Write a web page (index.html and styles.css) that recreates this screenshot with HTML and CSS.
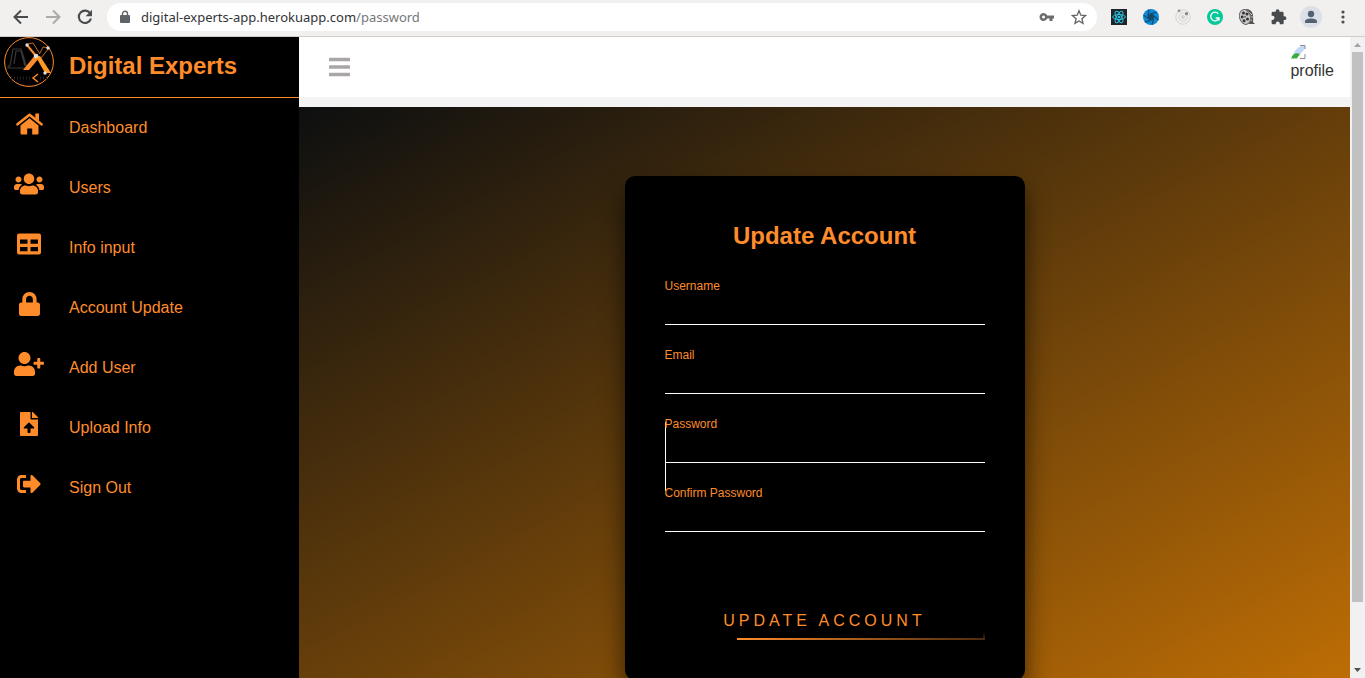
FILE: index.html
```html
<!DOCTYPE html>
<html lang="en">
<head>
<meta charset="utf-8">
<title>Digital Experts</title>
<link rel="stylesheet" href="styles.css">
</head>
<body>
<header class="browser">
  <nav class="browser-nav" aria-label="Browser">
    <button class="tool" aria-label="Back"><svg width="20" height="20" viewBox="0 0 20 20" fill="none" stroke="#4a4b4d" stroke-width="2"><path d="M17 10H4M10 3.500L3.500 10l6.500 6.500"/></svg></button>
    <button class="tool" aria-label="Forward"><svg width="20" height="20" viewBox="0 0 20 20" fill="none" stroke="#aaa" stroke-width="2"><path d="M3 10h13M10 3.500l6.500 6.500-6.500 6.500"/></svg></button>
    <button class="tool" aria-label="Reload"><svg width="20" height="20" viewBox="0 0 20 20"><path d="M15.300 6.500A6.200 6.200 0 1 0 16 11.500" fill="none" stroke="#4a4b4d" stroke-width="2.100"/><path d="M17 2.800v6.400h-6.400z" fill="#4a4b4d"/></svg></button>
  </nav>
  <div class="address">
    <svg width="10" height="14" viewBox="0 0 10 14"><path d="M2.500 6V3.700a2.500 2.500 0 0 1 5 0V6" fill="none" stroke="#5f6368" stroke-width="1.400"/><rect x="0" y="5" width="10" height="8" rx="1" fill="#5f6368"/></svg>
    <span class="url">digital-experts-app.herokuapp.com<span class="url-path">/password</span></span>
    <button class="tool" aria-label="Passwords"><svg width="16" height="16" viewBox="0 0 16 16"><path fill="#6b6c6e" fill-rule="evenodd" d="M8.200 6.500a4 4 0 1 0 0 3H10.500v2.500h3V9.500H15v-3zM4.500 6.500a1.500 1.500 0 1 1 0 3 1.500 1.500 0 0 1 0-3z"/></svg></button>
    <button class="tool" aria-label="Bookmark"><svg width="16" height="16" viewBox="0 0 16 16"><path d="M8 1.800l1.800 4.400 4.700.4-3.600 3.100 1.100 4.600L8 11.900l-4 2.400 1.100-4.600L1.500 6.600l4.700-.4z" fill="none" stroke="#636466" stroke-width="1.300"/></svg></button>
  </div>
  <div class="extensions">
    <button class="tool" aria-label="React tools"><svg width="16" height="16" viewBox="0 0 16 16"><rect width="16" height="16" fill="#20232a"/><g fill="none" stroke="#25c4df" stroke-width="1"><ellipse cx="8" cy="8" rx="6.300" ry="2.500"/><ellipse cx="8" cy="8" rx="6.300" ry="2.500" transform="rotate(60 8 8)"/><ellipse cx="8" cy="8" rx="6.300" ry="2.500" transform="rotate(120 8 8)"/></g><circle cx="8" cy="8" r="1.300" fill="#25c4df"/></svg></button>
    <button class="tool" aria-label="Shutter"><svg width="16" height="16" viewBox="0 0 16 16"><circle cx="8" cy="8" r="8" fill="#0b8bd6"/><circle cx="8" cy="8" r="3.200" fill="#164863"/><path d="M4.800 7.500L6 .5M7 4.900l6.500-1.500M11 7l4.500 4M10.500 10.500L9 15.800M8 11.300L1.800 13M5 9.500L.4 6" stroke="#164e76" stroke-width="1.300"/></svg></button>
    <button class="tool" aria-label="Orbit"><svg width="16" height="16" viewBox="0 0 16 16"><circle cx="8" cy="8" r="7.200" fill="none" stroke="#d2d2d2"/><circle cx="8" cy="8" r="4.200" fill="none" stroke="#d2d2d2"/><circle cx="8" cy="8" r="2" fill="#d0d0d0"/><circle cx="4" cy="1.800" r="1.500" fill="#989898"/><circle cx="11.500" cy="4.700" r="1.600" fill="#858585"/></svg></button>
    <button class="tool" aria-label="Writing assistant"><svg width="16" height="16" viewBox="0 0 16 16"><circle cx="8" cy="8" r="8" fill="#08c798"/><path d="M11.300 4.800A4.300 4.300 0 1 0 12 9H8.700M12 8.500v3.200" fill="none" stroke="#fff" stroke-width="1.300"/></svg></button>
    <button class="tool" aria-label="Film reel"><svg width="16" height="16" viewBox="0 0 16 16"><path d="M7 0c6 0 8 5 7 13l2 2H7z" fill="#555"/><path d="M9 2l4 4M11 8h3M10 12l3-1" stroke="#ccc"/><ellipse cx="6" cy="8" rx="5.500" ry="7.500" fill="#c8c8c8" stroke="#6a6a6a" transform="rotate(-15 6 8)"/><g fill="#333"><circle cx="4.500" cy="4" r="1.500"/><circle cx="8" cy="5" r="1.500"/><circle cx="3.200" cy="8" r="1.400"/><circle cx="5" cy="11.800" r="1.500"/><circle cx="8.500" cy="10" r="1.500"/><circle cx="6" cy="7.800" r=".8"/></g></svg></button>
    <button class="tool" aria-label="Extensions"><svg width="16" height="16" viewBox="0 0 16 16"><path fill="#494a4c" d="M13.500 7.300h-.9V4.200A1.400 1.400 0 0 0 11.200 2.800H8.500V2.100a1.900 1.900 0 0 0-3.800 0v.7H2A1.400 1.400 0 0 0 .6 4.200v2.600h.9a2 2 0 0 1 0 4.100H.6v3A1.400 1.400 0 0 0 2 15.300h2.800v-.9a2 2 0 0 1 4 0v.9h2.500a1.400 1.400 0 0 0 1.400-1.400v-2.800h.8a1.900 1.900 0 0 0 0-3.800z"/></svg></button>
    <button class="tool avatar" aria-label="Account"><svg width="14" height="14" viewBox="0 0 14 14" fill="#526173"><circle cx="7" cy="4" r="3.200"/><path d="M1 13v-1.600C1 9.300 4.500 8.500 7 8.500s6 .8 6 2.900V13z"/></svg></button>
    <button class="tool" aria-label="Menu"><svg width="16" height="16" viewBox="0 0 16 16" fill="#4d4e50"><circle cx="8" cy="3" r="1.600"/><circle cx="8" cy="8" r="1.600"/><circle cx="8" cy="13" r="1.600"/></svg></button>
  </div>
</header>
<div class="app">
  <aside class="sidebar">
    <a class="brand" href="#">
      <svg width="50" height="50" viewBox="0 0 50 50"><circle cx="25" cy="25" r="24.400" fill="#000" stroke="#ff8c2b" stroke-width="1"/><g fill="none" stroke="#39393b" stroke-width="1.200"><path d="M6 29l3-17h8l6 19M10 27l2-13h5l4 15M3 31h20M4 28l2 3"/></g><g fill="none" stroke="#b96927" stroke-width="1"><path d="M24 7l5-1 7 11M36 16l3-6 6 1-8 10"/></g><path d="M19 33h6l11-13-4-3z" fill="#ff8c2b"/><path d="M32 20l4-1 11 17h-6z" fill="#ff9a25"/><path d="M23 8l9 11" stroke="#ff8c2b" stroke-width="2"/><path d="M34 37l-5 4 5 4" fill="none" stroke="#ff8c2b" stroke-width="1.500"/><g fill="#ddd"><circle cx="23" cy="8" r="1.700"/><circle cx="32" cy="19" r="2.300"/><circle cx="44" cy="11" r="1.700"/><circle cx="41" cy="36" r="1.700"/></g><path d="M7 41h20M36 41h9" stroke="#242424" stroke-width="3" stroke-dasharray="1 2"/></svg>
      <span class="brand-name">Digital Experts</span>
    </a>
    <nav class="menu" aria-label="Main">
      <a href="#"><svg width="30" height="24" viewBox="0 0 30 24"><path d="M3.500 12.300L15.500 2.800 27.500 12.300" fill="none" stroke="currentColor" stroke-width="2.700" stroke-linecap="round" stroke-linejoin="round"/><path d="M21.300 1.500H25V9l-3.700-3z"/><path d="M6.500 13.500l9-7.200 9 7.200v8a1 1 0 0 1-1 1h-5.300v-6h-5v6H7.500a1 1 0 0 1-1-1z"/></svg><span>Dashboard</span></a>
      <a href="#"><svg width="30" height="24" viewBox="0 0 640 512"><path d="M96 224c35.300 0 64-28.700 64-64s-28.700-64-64-64-64 28.700-64 64 28.700 64 64 64zm448 0c35.300 0 64-28.700 64-64s-28.700-64-64-64-64 28.700-64 64 28.700 64 64 64zm32 32h-64c-17.600 0-33.500 7.100-45.100 18.600 40.300 22.100 68.900 62 75.100 109.400h66c17.700 0 32-14.300 32-32v-32c0-35.300-28.700-64-64-64zm-256 0c61.900 0 112-50.100 112-112S381.900 32 320 32 208 82.100 208 144s50.100 112 112 112zm76.800 32h-8.300c-20.800 10-43.900 16-68.500 16s-47.600-6-68.500-16h-8.300C179.600 288 128 339.600 128 403.200V432c0 26.500 21.500 48 48 48h288c26.500 0 48-21.500 48-48v-28.800c0-63.600-51.600-115.200-115.200-115.200zm-223.700-13.400C161.500 263.100 145.600 256 128 256H64c-35.300 0-64 28.700-64 64v32c0 17.700 14.300 32 32 32h65.900c6.300-47.400 34.900-87.300 75.200-109.400z"/></svg><span>Users</span></a>
      <a href="#"><svg width="30" height="24" viewBox="0 0 30 24"><path fill-rule="evenodd" d="M5 1.500h20a2 2 0 0 1 2 2v17a2 2 0 0 1-2 2H5a2 2 0 0 1-2-2v-17a2 2 0 0 1 2-2zM6 7.500v4.200h7.500V7.500zm10.500 0v4.200H24V7.500zM6 15v4.200h7.500V15zm10.500 0v4.200H24V15z"/></svg><span>Info input</span></a>
      <a href="#"><svg width="30" height="24" viewBox="-106 0 640 512"><path d="M400 224h-24v-72C376 68.200 307.800 0 224 0S72 68.200 72 152v72H48c-26.500 0-48 21.500-48 48v192c0 26.500 21.500 48 48 48h352c26.500 0 48-21.500 48-48V272c0-26.500-21.500-48-48-48zm-104 0H152v-72c0-39.700 32.300-72 72-72s72 32.300 72 72v72z"/></svg><span>Account Update</span></a>
      <a href="#"><svg width="30" height="24" viewBox="0 0 640 512"><path d="M624 208h-64v-64c0-8.800-7.200-16-16-16h-32c-8.800 0-16 7.200-16 16v64h-64c-8.800 0-16 7.200-16 16v32c0 8.800 7.200 16 16 16h64v64c0 8.800 7.200 16 16 16h32c8.800 0 16-7.200 16-16v-64h64c8.800 0 16-7.200 16-16v-32c0-8.800-7.200-16-16-16zm-400 48c70.700 0 128-57.300 128-128S294.700 0 224 0 96 57.300 96 128s57.300 128 128 128zm89.600 32h-16.700c-22.200 10.200-46.900 16-72.900 16s-50.600-5.800-72.900-16h-16.700C60.200 288 0 348.200 0 422.400V464c0 26.500 21.500 48 48 48h352c26.500 0 48-21.500 48-48v-41.600c0-74.200-60.200-134.400-134.400-134.400z"/></svg><span>Add User</span></a>
      <a href="#"><svg width="30" height="24" viewBox="-128 0 640 512"><path d="M224 136V0H24C10.700 0 0 10.700 0 24v464c0 13.300 10.700 24 24 24h336c13.300 0 24-10.700 24-24V160H248c-13.200 0-24-10.800-24-24zm65.200 216H224v80c0 8.800-7.200 16-16 16h-32c-8.800 0-16-7.200-16-16v-80H94.800c-14.300 0-21.400-17.300-11.300-27.400l96.400-95.700c6.700-6.600 17.400-6.600 24 0l96.400 95.700c10.200 10.100 3.100 27.400-11.100 27.400zM377 105L279.100 7c-4.500-4.500-10.600-7-17-7H256v128h128v-6.100c0-6.300-2.500-12.400-7-16.900z"/></svg><span>Upload Info</span></a>
      <a href="#"><svg width="30" height="24" viewBox="-64 0 640 512"><path d="M497 273L329 441c-15 15-41 4.500-41-17v-96H152c-13.300 0-24-10.700-24-24v-96c0-13.300 10.700-24 24-24h136V88c0-21.400 25.900-32 41-17l168 168c9.300 9.400 9.300 24.600 0 34zM192 436v-40c0-6.600-5.400-12-12-12H96c-17.700 0-32-14.300-32-32V160c0-17.700 14.300-32 32-32h84c6.600 0 12-5.400 12-12V76c0-6.600-5.400-12-12-12H96c-53 0-96 43-96 96v192c0 53 43 96 96 96h84c6.600 0 12-5.400 12-12z"/></svg><span>Sign Out</span></a>
    </nav>
  </aside>
  <div class="main">
    <div class="topbar">
      <button class="tool" aria-label="Toggle menu"><svg width="22" height="20" viewBox="0 0 22 20" fill="#aaa6a6"><rect x="0" y=".7" width="21" height="3.600" rx=".6"/><rect x="0" y="8.200" width="21" height="3.600" rx=".6"/><rect x="0" y="15.700" width="21" height="3.600" rx=".6"/></svg></button>
      <a class="profile" href="#">
        <svg width="16" height="16" viewBox="0 0 16 16"><path d="M2 13C4 7 8 2 14 1.500h1V5L7 14H2z" fill="#c4d8f5"/><path d="M1 14.500c2-5 6-6.500 9-4l-3 4z" fill="#38ad3c"/><path d="M10 1.500h5V5M15 10v4.500h-5" fill="none" stroke="#8d8d8d"/><path d="M15 6l-7 8" stroke="#fff" stroke-width="1.500"/></svg>
        <span>profile</span>
      </a>
    </div>
    <main class="stage">
      <form class="card">
        <h1>Update Account</h1>
        <div class="field"><label for="username">Username</label><input id="username" type="text"></div>
        <div class="field"><label for="email">Email</label><input id="email" type="email"></div>
        <div class="field joined"><label for="password">Password</label><input id="password" type="password"></div>
        <div class="field"><label for="confirm">Confirm Password</label><input id="confirm" type="password"></div>
        <button class="submit" type="submit">Update Account</button>
      </form>
    </main>
  </div>
  <div class="scrollbar" aria-hidden="true">
    <svg width="15" height="15" viewBox="0 0 15 15"><path d="M4 10L7.500 6 11 10z" fill="#a3a3a3"/></svg>
    <div class="track"><div class="thumb"></div></div>
    <svg width="15" height="15" viewBox="0 0 15 15"><path d="M4 5h7L7.500 9z" fill="#505050"/></svg>
  </div>
</div>
</body>
</html>
```
FILE: styles.css
```css
* { box-sizing: border-box; }

body {
  margin: 0;
  height: 100vh;
  overflow: hidden;
  display: flex;
  flex-direction: column;
  font-family: "Liberation Sans", Arial, sans-serif;
  font-size: 16px;
}

button { padding: 0; border: 0; background: none; font: inherit; }
a { color: inherit; text-decoration: none; }
svg { display: block; flex: none; }

.browser {
  flex: none;
  display: flex;
  align-items: center;
  height: 37px;
  padding: 0 14px 3px 11px;
  background: #f1f0ef;
  border-bottom: 1px solid #cfcecd;
}
.browser-nav { display: flex; gap: 12px; margin-right: 12px; }
.address {
  flex: 1;
  display: flex;
  align-items: center;
  height: 28px;
  padding: 0 10px 0 13px;
  border-radius: 14px;
  background: #fff;
}
.address .tool { margin-left: 16px; }
.url {
  flex: 1;
  padding-left: 11px;
  font-family: "Noto Sans", sans-serif;
  font-size: 13px;
  color: #323336;
}
.url-path { color: #75777b; }
.extensions { display: flex; align-items: center; gap: 16px; margin-left: 14px; }
.avatar {
  display: grid;
  place-items: center;
  width: 22px;
  height: 22px;
  margin: 0 -3px;
  border-radius: 50%;
  background: #dce0e6;
}

.app { flex: 1; min-height: 0; display: flex; }

.sidebar { flex: none; width: 299px; background: #000; color: #ff8c2b; }
.brand {
  display: flex;
  gap: 15px;
  height: 61px;
  padding-left: 4px;
  border-bottom: 1px solid #ff8c2b;
}
.brand-name { font-size: 24px; font-weight: bold; line-height: 58px; }
.menu a {
  display: flex;
  gap: 25px;
  height: 60px;
  padding-left: 14px;
  line-height: 60px;
}
.menu svg { margin-top: 14px; fill: currentColor; }

.main {
  flex: 1;
  display: flex;
  flex-direction: column;
  overflow: hidden;
  background: #f4f4f4;
}
.topbar {
  flex: none;
  display: flex;
  align-items: center;
  justify-content: space-between;
  height: 60px;
  margin-bottom: 10px;
  padding: 0 16px 0 30px;
  background: #fff;
}
.profile { padding-bottom: 8px; color: #333; }
.profile span { display: block; line-height: 22px; }

.stage {
  flex: none;
  display: flex;
  align-items: center;
  justify-content: center;
  height: calc(100vh - 37px);
  background: linear-gradient(152deg, #0d0f10, #c87304);
}
.card {
  isolation: isolate;
  width: 400px;
  padding: 40px;
  border-radius: 10px;
  background: #000;
  box-shadow: 0 15px 25px rgba(0, 0, 0, 0.6);
  color: #ff8c2b;
}
.card h1 { margin: 0 0 28px; font-size: 24px; line-height: 40px; text-align: center; }
.field {
  display: flex;
  flex-direction: column;
  height: 41px;
  margin-bottom: 28px;
  border-bottom: 1px solid #fff;
}
.field label { font-size: 12px; line-height: 4px; }
.field input {
  flex: 1;
  width: 100%;
  padding: 0;
  border: 0;
  outline: 0;
  background: none;
  color: #fff;
  font: inherit;
}
.joined { position: relative; }
.joined::before {
  content: "";
  position: absolute;
  z-index: -1;
  top: 0;
  left: 0;
  width: 1px;
  height: 69px;
  background: #fff;
}
.submit {
  display: block;
  width: 100%;
  height: 38px;
  margin-top: 70px;
  color: inherit;
  letter-spacing: 4px;
  text-transform: uppercase;
  background:
    linear-gradient(90deg, #ff8c2b, #4d2a0d) right bottom / 248px 2px no-repeat,
    linear-gradient(0deg, #4d2a0d, #000) right bottom / 2px 8px no-repeat;
}

.scrollbar {
  flex: none;
  display: flex;
  flex-direction: column;
  width: 15px;
  background: #f1f1f1;
}
.track { flex: 1; padding: 0 2px; }
.thumb { height: 90%; background: #c1c1c1; }
```
